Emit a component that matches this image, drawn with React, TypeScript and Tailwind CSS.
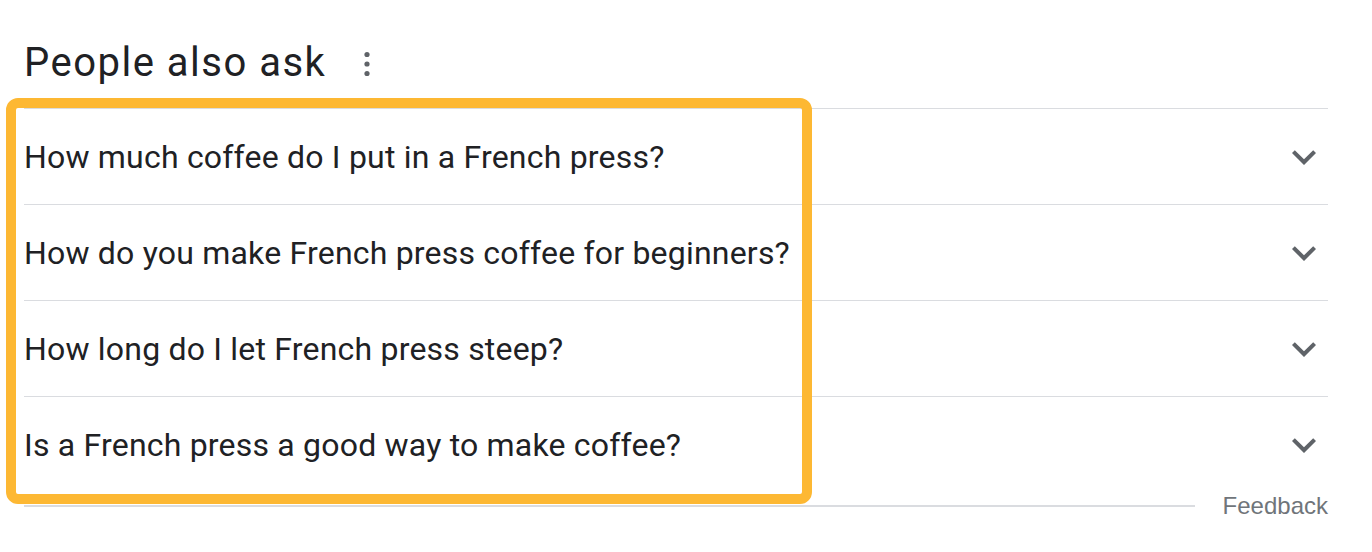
import React from "react";

const questions = [
  "How much coffee do I put in a French press?",
  "How do you make French press coffee for beginners?",
  "How long do I let French press steep?",
  "Is a French press a good way to make coffee?",
];

function Chevron() {
  return (
    <svg width="48" height="48" viewBox="0 0 24 24">
      <path d="M7.41 8.59 12 13.17l4.59-4.58L18 10l-6 6-6-6 1.41-1.41z" fill="#5f6368" />
    </svg>
  );
}

export default function App() {
  return (
    <div className="relative w-[1372px] h-[552px] bg-white overflow-hidden font-['Roboto',_'Liberation_Sans',_sans-serif] text-[#202124]">
      <div className="pl-[24px] pr-[44px]">
        <div className="h-[108px] flex items-center gap-[36px] pt-[18px]">
          <span className="text-[40px] leading-none tracking-[1.5px]">People also ask</span>
          <svg width="10" height="26" viewBox="0 0 10 26" className="mt-[2px]">
            <circle cx="5" cy="3.5" r="2.6" fill="#5f6368" />
            <circle cx="5" cy="13" r="2.6" fill="#5f6368" />
            <circle cx="5" cy="22.5" r="2.6" fill="#5f6368" />
          </svg>
        </div>
        {questions.map((q) => (
          <div key={q} className="h-[96px] border-t border-[#dadce0] flex items-center justify-between">
            <span className="text-[32px] leading-none tracking-[0.2px]">{q}</span>
            <div className="flex items-center">
              <Chevron />
            </div>
          </div>
        ))}
        <div className="flex items-center gap-[28px] mt-[2px]">
          <div className="flex-1 border-t-2 border-[#dadce0]" />
          <span className="text-[24px] leading-none text-[#70757a] font-['Liberation_Sans',_sans-serif]">Feedback</span>
        </div>
      </div>
      <div className="absolute left-[6px] top-[98px] w-[806px] h-[406px] border-[10px] border-[#fdb833] rounded-[12px]" />
    </div>
  );
}
